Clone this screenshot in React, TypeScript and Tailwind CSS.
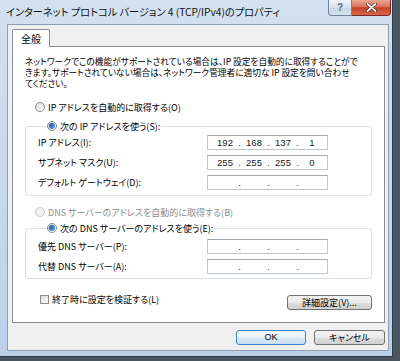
import React from "react"

const jp = "font-['Noto_Sans_CJK_JP','Noto_Sans_CJK_SC',sans-serif] [font-feature-settings:'palt']"

const Radio = ({ checked, disabled }: { checked?: boolean; disabled?: boolean }) => (
    <span
        className={`flex shrink-0 items-center justify-center w-[10px] h-[10px] rounded-full border ${
            disabled ? "border-[#c4c4c4] bg-[#f3f3f3]" : "border-[#8b8b8b] bg-gradient-to-br from-[#d6d6d6] to-[#ffffff]"
        }`}
    >
        {checked && <span className="w-[6px] h-[6px] rounded-full bg-gradient-to-br from-[#17489a] to-[#62aef0]" />}
    </span>
)

const IpField = ({ parts }: { parts?: string[] }) => (
    <div className="w-[121px] h-[15px] bg-white border border-[#c3c7cd] border-t-[#a3a7ae] flex items-center pl-[4px] text-[9.5px] leading-none text-[#222] font-['Liberation_Sans',sans-serif]">
        {[0, 1, 2, 3].map(i => (
            <React.Fragment key={i}>
                <span className="w-[26px] text-center">{parts ? parts[i] : ""}</span>
                {i < 3 && <span className="w-[3px] text-center">.</span>}
            </React.Fragment>
        ))}
    </div>
)

const Row = ({ label, parts }: { label: string; parts?: string[] }) => (
    <div className="flex items-center h-[15px]">
        <span className="w-[169px] text-[9px] leading-none whitespace-nowrap">{label}</span>
        <IpField parts={parts} />
    </div>
)

const Button = ({ children, primary, className = "" }: { children: React.ReactNode; primary?: boolean; className?: string }) => (
    <button
        className={`h-[15px] rounded-[3px] border text-[9px] leading-none flex items-center justify-center ${
            primary
                ? "border-[#3b84c8] bg-[linear-gradient(#f4f9fd,#e6f1f9_50%,#d6e8f5_51%,#c9e0f1)]"
                : "border-[#707070] bg-[linear-gradient(#f2f2f2,#ebebeb_50%,#dddddd_51%,#cfcfcf)]"
        } ${className}`}
    >
        {children}
    </button>
)

const App = () => {
    return (
        <div className={`w-[400px] h-[361px] bg-[#4a5562] overflow-hidden text-black ${jp}`}>
            <div className="w-[393px] h-[357px] flex flex-col bg-gradient-to-b from-[#d3e1f0] to-[#bcd1e8] border-r border-b border-[#2f3a47]">
                {/* title bar */}
                <div className="flex h-[24px] shrink-0">
                    <span className="pl-[6px] pt-[5px] text-[10.2px] leading-[14px] text-[#111] whitespace-nowrap">
                        インターネット プロトコル バージョン 4 (TCP/IPv4)のプロパティ
                    </span>
                    <div className="ml-auto mr-[1px] flex h-[16px]">
                        <div className="w-[24px] h-[16px] rounded-bl-[4px] border border-t-0 border-[#6f82a0] bg-[linear-gradient(#eef3f9,#dbe5f0_50%,#c7d6e7_51%,#d6e2ef)] flex items-center justify-center text-[10px] leading-none font-bold text-[#56657e] font-['Liberation_Sans',sans-serif]">
                            ?
                        </div>
                        <div className="w-[39px] h-[16px] rounded-br-[4px] border border-t-0 border-l-0 border-[#7a2c20] bg-[linear-gradient(#e9a894,#d9735b_45%,#c2412a_52%,#d8664a)] flex items-center justify-center">
                            <svg width="11" height="9" viewBox="0 0 11 9">
                                <path d="M1.5 1 L9.5 8 M9.5 1 L1.5 8" stroke="#3b1810" strokeWidth="3" strokeLinecap="round" />
                                <path d="M1.5 1 L9.5 8 M9.5 1 L1.5 8" stroke="#ffffff" strokeWidth="1.8" strokeLinecap="round" />
                            </svg>
                        </div>
                    </div>
                </div>

                {/* client */}
                <div className="ml-[7px] mr-[3px] flex flex-col bg-[#f0f0f0] border border-[#8e9db1] pl-[4px] pr-[3px] pt-[4px] pb-[5px]">
                    <div className="flex">
                        <div className="relative z-10 -mb-[1px] w-[38px] h-[18px] bg-white border border-b-0 border-[#898c95] rounded-t-[2px] flex items-center justify-center text-[10px] leading-none">
                            全般
                        </div>
                    </div>
                    <div className="w-[373px] h-[277px] bg-white border border-[#898c95] flex flex-col">
                        <div className="pl-[12px] pt-[9px] text-[8.7px] leading-[11px] whitespace-nowrap">
                            <div>ネットワークでこの機能がサポートされている場合は、IP 設定を自動的に取得することがで</div>
                            <div>きます。サポートされていない場合は、ネットワーク管理者に適切な IP 設定を問い合わせ</div>
                            <div>てください。</div>
                        </div>

                        <div className="mt-[12px] pl-[22px] flex items-center gap-[3px] h-[12px] text-[9px] leading-none">
                            <Radio />
                            <span>IP アドレスを自動的に取得する(O)</span>
                        </div>

                        <fieldset className="mt-[7px] ml-[12px] w-[347px] border border-[#d5dfe5] rounded-[3px] pl-[12px] pt-[3px] pb-[5px] flex flex-col gap-[5px]">
                            <legend className="ml-[8px] px-[1px] flex items-center gap-[3px] h-[12px] text-[9px] leading-none">
                                <Radio checked />
                                <span>次の IP アドレスを使う(S):</span>
                            </legend>
                            <Row label="IP アドレス(I):" parts={["192", "168", "137", "1"]} />
                            <Row label="サブネット マスク(U):" parts={["255", "255", "255", "0"]} />
                            <Row label="デフォルト ゲートウェイ(D):" />
                        </fieldset>

                        <div className="mt-[10px] pl-[22px] flex items-center gap-[3px] h-[12px] text-[9px] leading-none text-[#8d8d8d]">
                            <Radio disabled />
                            <span>DNS サーバーのアドレスを自動的に取得する(B)</span>
                        </div>

                        <fieldset className="mt-[4px] ml-[12px] w-[347px] border border-[#d5dfe5] rounded-[3px] pl-[12px] pt-[5px] pb-[4px] flex flex-col gap-[5px]">
                            <legend className="ml-[8px] px-[1px] flex items-center gap-[3px] h-[12px] text-[9px] leading-none">
                                <Radio checked />
                                <span>次の DNS サーバーのアドレスを使う(E):</span>
                            </legend>
                            <Row label="優先 DNS サーバー(P):" />
                            <Row label="代替 DNS サーバー(A):" />
                        </fieldset>

                        <div className="mt-[16px] flex items-start pl-[27px] pr-[12px]">
                            <div className="flex items-center gap-[3px] h-[9px] text-[9px] leading-none">
                                <span className="w-[9px] h-[9px] border border-[#8f8f8f] bg-gradient-to-br from-[#dcdcdc] to-[#fbfbfb]" />
                                <span>終了時に設定を検証する(L)</span>
                            </div>
                            <Button className="ml-auto w-[85px]">詳細設定(V)...</Button>
                        </div>
                    </div>

                    <div className="mt-[7px] flex justify-end gap-[8px]">
                        <Button primary className="w-[70px] font-['Liberation_Sans',sans-serif]">OK</Button>
                        <Button className="w-[71px]">キャンセル</Button>
                    </div>
                </div>
            </div>
        </div>
    )
}

export default App
